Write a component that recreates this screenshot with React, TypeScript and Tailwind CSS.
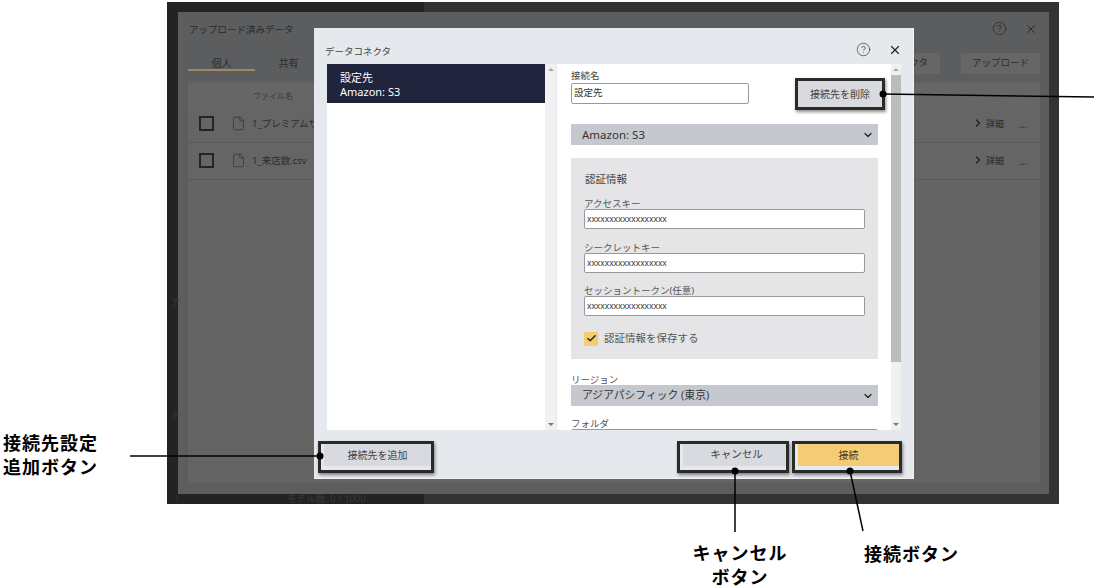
import type { ReactNode } from 'react';
import { Check, ChevronDown, ChevronRight, CircleHelp, File, X } from 'lucide-react';

const FONT = "font-['Noto_Sans','Noto_Sans_CJK_JP',sans-serif]";

function Arrow({ up }: { up?: boolean }) {
  return (
    <div className="flex h-[11px] items-center justify-center">
      <div
        className={`h-0 w-0 border-x-[3px] border-x-transparent ${
          up ? 'border-b-[3px] border-b-[#a8a8a8]' : 'border-t-[3px] border-t-[#777]'
        }`}
      />
    </div>
  );
}

function BgRow({ name }: { name: string }) {
  return (
    <div className="flex h-[37px] items-center border-b border-[#5a5a5a] bg-[#656565] pb-[2px] pl-[11px] pr-[13px]">
      <div className="h-[15px] w-[15px] border-2 border-[#242424]" />
      <File size={15} strokeWidth={1} className="ml-[17px] text-[#2c2c2c]" />
      <span className="ml-[6px] pt-[2px] text-[9.5px] text-[#2a2a2a]">{name}</span>
      <div className="ml-auto flex items-center pt-[2px] text-[9px] text-[#2a2a2a]">
        <ChevronRight size={12} strokeWidth={2.5} className="mb-[2px] text-[#1f1f1f]" />
        <span className="ml-[2px]">詳細</span>
        <span className="ml-[15px] text-[10px] leading-[10px]">…</span>
      </div>
    </div>
  );
}

function Field({ label, value, gap }: { label: string; value: string; gap: string }) {
  return (
    <>
      <div className={`${gap} h-[13px] text-[9.5px] leading-[15px] text-[#555]`}>{label}</div>
      <div className="flex h-[20px] w-[281px] items-center rounded-[2px] border border-[#999] bg-white pl-[2px] text-[8.4px] text-[#333]">
        {value}
      </div>
    </>
  );
}

function Mark({ className, children }: { className: string; children: ReactNode }) {
  return (
    <div className={`h-[32px] border-[3px] border-[#2a2a2a] shadow-[1px_2px_3px_rgba(0,0,0,0.45)] ${className}`}>
      {children}
    </div>
  );
}

function Select({ label, size }: { label: string; size: string }) {
  return (
    <div className={`flex h-[21px] w-[307px] items-center justify-between bg-[#c6c8cf] pl-[11px] pr-[4px] text-[#333] ${size}`}>
      <span>{label}</span>
      <ChevronDown size={12} strokeWidth={2.5} className="text-[#222]" />
    </div>
  );
}

function Dialog() {
  return (
    <div className="absolute left-[147px] top-[26px] flex h-[451px] w-[600px] flex-col border-b border-r border-[#f4f4f4] bg-[#e5e8ed] text-[#333]">
      <div className="flex h-[36px] shrink-0 items-end justify-between pb-[5px] pl-[11px] pr-[11px]">
        <span className="text-[9.5px] leading-[14px] text-[#444]">データコネクタ</span>
        <div className="flex items-center gap-[17px] pb-[2px]">
          <CircleHelp size={15} strokeWidth={1} className="text-[#222]" />
          <X size={14} strokeWidth={2} className="text-[#222]" />
        </div>
      </div>

      <div className="flex h-[366px] shrink-0 pl-[13px] pr-[12px]">
        <div className="flex w-[229px] shrink-0">
          <div className="w-[218px] bg-white">
            <div className="h-[39px] bg-[#20243d] pl-[13px] pt-[7px] text-[11px] leading-[14px] text-white">
              <div>設定先</div>
              <div>Amazon: S3</div>
            </div>
          </div>
          <div className="flex w-[11px] flex-col justify-between bg-[#f1f1f1]">
            <Arrow up />
            <Arrow />
          </div>
        </div>

        <div className="ml-[1px] flex flex-1 overflow-hidden bg-white">
          <div className="flex-1 pl-[14px] pt-[5px]">
            <div className="flex h-[35px] w-[307px] items-start">
              <div>
                <div className="h-[14px] text-[9.5px] leading-[14px] text-[#444]">接続名</div>
                <div className="flex h-[21px] w-[178px] items-center rounded-[2px] border border-[#999] bg-white pl-[2px] text-[9.5px] text-[#333]">
                  設定先
                </div>
              </div>
              <Mark className="ml-auto mr-[-7px] mt-[9px] w-[90px] shrink-0">
                <div className="flex h-full items-center justify-center bg-[#d8dae0] text-[10px] text-[#444]">
                  接続先を削除
                </div>
              </Mark>
            </div>

            <div className="mt-[20px]">
              <Select label="Amazon: S3" size="text-[11.5px]" />
            </div>

            <div className="mt-[13px] h-[201px] w-[307px] bg-[#e5e5e8] pl-[13px] pt-[13px]">
              <div className="h-[16px] pl-[1px] text-[10.5px] leading-[16px] text-[#444]">認証情報</div>
              <Field gap="mt-[9px]" label="アクセスキー" value="xxxxxxxxxxxxxxxxxx" />
              <Field gap="mt-[11px]" label="シークレットキー" value="xxxxxxxxxxxxxxxxxx" />
              <Field gap="mt-[10px]" label="セッショントークン(任意)" value="xxxxxxxxxxxxxxxxxx" />
              <div className="mt-[15px] flex items-center">
                <div className="flex h-[14px] w-[14px] items-center justify-center bg-[#f6cc73]">
                  <Check size={11} strokeWidth={3} className="text-[#222]" />
                </div>
                <span className="ml-[6px] text-[10.5px] text-[#555]">認証情報を保存する</span>
              </div>
            </div>

            <div className="mt-[15px] h-[11px] text-[9.5px] leading-[11px] text-[#555]">リージョン</div>
            <Select label="アジアパシフィック (東京)" size="text-[10.8px]" />
            <div className="mt-[12px] h-[11px] text-[9.5px] leading-[11px] text-[#555]">フォルダ</div>
            <div className="h-[21px] w-[307px] rounded-[2px] border border-[#999]" />
          </div>

          <div className="flex w-[10px] shrink-0 flex-col bg-[#f1f1f1]">
            <Arrow up />
            <div className="h-[287px] bg-[#bcbcbc]" />
            <div className="mt-auto">
              <Arrow />
            </div>
          </div>
        </div>
      </div>

      <div className="flex flex-1 items-start pl-[4px] pr-[11px] pt-[11px] text-[10px] text-[#444]">
        <Mark className="w-[116px]">
          <div className="ml-[3px] flex h-[22px] items-center justify-center bg-[#d8dae0]">接続先を追加</div>
        </Mark>
        <Mark className="ml-auto w-[112px]">
          <div className="ml-[3px] flex h-[22px] items-center justify-center bg-[#d8dae0] pl-[4px] text-[10.5px]">キャンセル</div>
        </Mark>
        <Mark className="ml-[3px] w-[110px]">
          <div className="ml-[3px] flex h-[22px] items-center justify-center bg-[#f4cc75] text-[#4a3a20]">接続</div>
        </Mark>
      </div>
    </div>
  );
}

function Screen() {
  return (
    <div className="absolute left-[167px] top-[2px] flex h-[502px] w-[892px] flex-col bg-[linear-gradient(90deg,#232323_257px,#333_257px)] pl-[11px] pr-[10px] pt-[10px]">
      <div className="flex flex-1 flex-col bg-[#5c5d5f] pl-[10px] pr-[9px]">
        <div className="flex h-[33px] shrink-0 items-center justify-between pl-[1px] pt-[4px] text-[#2a2a2a]">
          <span className="text-[9.5px]">アップロード済みデータ</span>
          <div className="mb-[4px] flex items-center gap-[17px] pr-[2px] text-[#222]">
            <CircleHelp size={15} strokeWidth={1} />
            <X size={14} strokeWidth={1.5} />
          </div>
        </div>

        <div className="flex h-[40px] shrink-0 items-start justify-between text-[10px] text-[#2c2c2c]">
          <div className="flex pt-[9px]">
            <div className="h-[17px] w-[67px] border-b-2 border-[#9b8a5c] text-center leading-[18px]">個人</div>
            <div className="w-[67px] text-center leading-[18px]">共有</div>
          </div>
          <div className="flex gap-[21px] pt-[8px] text-[9.5px]">
            <div className="flex h-[21px] w-[60px] items-center justify-end bg-[#666] pr-[12px]">コネクタ</div>
            <div className="flex h-[21px] w-[79px] items-center justify-center bg-[#666]">アップロード</div>
          </div>
        </div>

        <div className="mb-[11px] mt-[-3px] flex-1 bg-[#646464]" />
      </div>
      <div className="flex h-[10px] shrink-0 items-center text-[#3a3a3a]">
        <ChevronRight size={10} className="ml-[-6px] rotate-180" />
        <span className="ml-[105px] text-[9.5px]">モデル数: 0 / 1000</span>
      </div>

      <div className="absolute left-[21px] right-[19px] top-[83px]">
        <div className="flex h-[21px] items-center bg-[#666] pl-[65px] text-[8px] text-[#383838]">ファイル名</div>
        <BgRow name="1_プレミアムサービス.csv" />
        <BgRow name="1_来店数.csv" />
      </div>
      <span className="absolute left-[4px] top-[294px] text-[9px] text-[#3a3a3a]">ア</span>
      <span className="absolute left-[4px] top-[406px] text-[9px] text-[#3a3a3a]">ド</span>
      <Dialog />
    </div>
  );
}

export default function App() {
  return (
    <div className={`relative h-[588px] w-[1097px] overflow-hidden bg-white ${FONT}`}>
      <Screen />

      <svg className="absolute left-0 top-0" width={1097} height={588}>
        <g stroke="#000" strokeWidth={1.5} fill="none">
          <line x1={883} y1={94} x2={1094} y2={97} />
          <line x1={130} y1={456} x2={320} y2={456} />
          <line x1={735} y1={471} x2={735} y2={532} />
          <line x1={850} y1={471} x2={863} y2={531} />
        </g>
        <g fill="#000">
          <circle cx={883} cy={94} r={3.5} />
          <circle cx={320} cy={456} r={3.5} />
          <circle cx={735} cy={471} r={3.5} />
          <circle cx={850} cy={471} r={3.5} />
        </g>
      </svg>

      <div className="absolute left-[3px] top-[431px] text-[18px] font-bold leading-[24px] tracking-[1px] text-black">
        <div>接続先設定</div>
        <div>追加ボタン</div>
      </div>
      <div className="absolute left-[680px] top-[541px] w-[120px] text-center text-[18px] font-bold leading-[24px] tracking-[1px] text-black">
        <div>キャンセル</div>
        <div>ボタン</div>
      </div>
      <div className="absolute left-[864px] top-[542px] text-[18px] font-bold leading-[24px] tracking-[1px] text-black">
        接続ボタン
      </div>
    </div>
  );
}
